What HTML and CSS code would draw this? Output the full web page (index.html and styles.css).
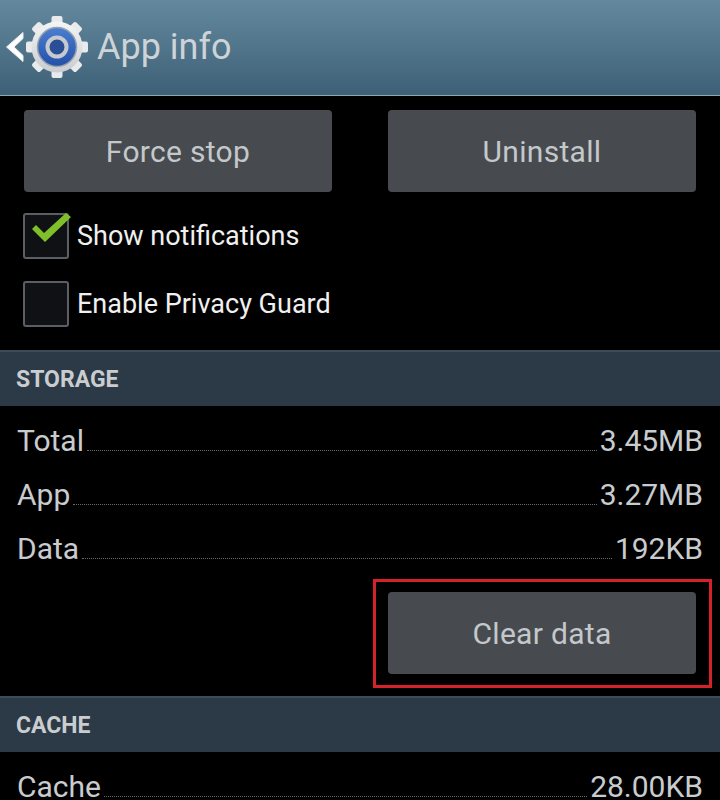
FILE: index.html
```html
<!DOCTYPE html>
<html lang="en">
<head>
<meta charset="utf-8">
<title>App info</title>
<link rel="stylesheet" href="styles.css">
</head>
<body>
<div class="screen">
  <header class="bar">
    <svg class="back" width="24" height="32" viewBox="0 0 24 32"><path d="M20 1.500 L3.500 16 L20 30.500 L20 24.500 L11 16 L20 7.500 Z" fill="#fff" stroke="#e8ecee" stroke-width="1"/></svg>
    <svg class="gear" width="62" height="64" viewBox="-31 -32 62 64">
      <defs>
        <linearGradient id="g1" x1="0" y1="0" x2="0" y2="1"><stop offset="0" stop-color="#f4f5f6"/><stop offset="1" stop-color="#c9ccd0"/></linearGradient>
        <linearGradient id="g2" x1="0" y1="0" x2="0" y2="1"><stop offset="0" stop-color="#4a7fd0"/><stop offset="1" stop-color="#2450a8"/></linearGradient>
      </defs>
      <g fill="#e9eaec">
        <rect x="-5.500" y="-31" width="11" height="62" rx="2"/>
        <rect x="-5.500" y="-31" width="11" height="62" rx="2" transform="rotate(45)"/>
        <rect x="-5.500" y="-31" width="11" height="62" rx="2" transform="rotate(90)"/>
        <rect x="-5.500" y="-31" width="11" height="62" rx="2" transform="rotate(135)"/>
      </g>
      <circle r="25.500" fill="url(#g1)"/>
      <circle r="19.500" fill="url(#g2)" stroke="#9aa3ad" stroke-width="1.500"/>
      <circle r="9.500" fill="#2a4f96" stroke="#c6cacf" stroke-width="4"/>
    </svg>
    <h1 class="title">App info</h1>
  </header>

  <div class="actions">
    <button class="btn">Force stop</button>
    <button class="btn">Uninstall</button>
  </div>

  <div class="checks">
    <div class="check">
      <span class="box">
        <svg class="tick" width="46" height="36" viewBox="0 0 46 36"><path d="M7 16 L11 12 L19 20 L41 0 L46 4 L20 29 Z" fill="#7fbf2a"/></svg>
      </span>
      <span>Show notifications</span>
    </div>
    <div class="check">
      <span class="box"></span>
      <span>Enable Privacy Guard</span>
    </div>
  </div>

  <div class="section">STORAGE</div>
  <div class="rows">
    <div class="row"><span>Total</span><i class="dots"></i><span>3.45MB</span></div>
    <div class="row"><span>App</span><i class="dots"></i><span>3.27MB</span></div>
    <div class="row"><span>Data</span><i class="dots"></i><span>192KB</span></div>
  </div>
  <div class="clear-wrap">
    <button class="btn">Clear data</button>
    <div class="highlight"></div>
  </div>

  <div class="section section-cache">CACHE</div>
  <div class="rows rows-cache">
    <div class="row"><span>Cache</span><i class="dots"></i><span>28.00KB</span></div>
  </div>
</div>
</body>
</html>
```
FILE: styles.css
```css
* { box-sizing: border-box; }
html, body { margin: 0; padding: 0; background: #000; }
.screen {
  width: 720px;
  height: 800px;
  overflow: hidden;
  background: #000;
  font-family: Roboto, "Liberation Sans", sans-serif;
  color: #d4d6d8;
}
.bar {
  height: 96px;
  display: flex;
  align-items: center;
  padding-left: 3px;
  background: linear-gradient(#64899f, #3d6076);
  border-bottom: 1px solid #8fa6b3;
}
.back { flex: none; margin-top: -2px; }
.gear { flex: none; margin-left: -1px; margin-top: -2px; }
.title {
  margin: 0 0 0 9px;
  font-size: 36px;
  font-weight: 400;
  color: #cdd3d7;
  line-height: 1;
  margin-top: -2px;
}
.actions {
  display: flex;
  justify-content: space-between;
  padding: 14px 24px 0;
}
.btn {
  width: 308px;
  height: 82px;
  border: 0;
  border-radius: 4px;
  background: #474b4f;
  color: #c4c8cb;
  font-family: inherit;
  font-size: 30px;
  letter-spacing: 0.3px;
  padding: 0;
}
.checks {
  padding: 21px 0 0 23px;
  display: flex;
  flex-direction: column;
  gap: 22px;
}
.check {
  display: flex;
  align-items: center;
  height: 46px;
  gap: 8px;
  font-size: 27px;
  color: #f0f0f0;
}
.box {
  position: relative;
  width: 46px;
  height: 46px;
  flex: none;
  background: #0f1114;
  border: 2px solid #5b5f63;
  border-radius: 3px;
}
.tick { position: absolute; left: 0; top: -2px; }
.section {
  margin-top: 23px;
  height: 56px;
  padding-left: 16px;
  display: flex;
  align-items: center;
  background: #2b3a46;
  border-top: 2px solid #3c4c59;
  font-size: 23px;
  font-weight: 700;
  color: #c9cdd0;
}
.rows { padding: 13px 17px 0; }
.row {
  display: flex;
  align-items: baseline;
  height: 54px;
  font-size: 30px;
  color: #c9cccf;
  line-height: 44px;
}
.dots {
  flex: 1;
  margin: 0 3px;
  border-bottom: 1px dotted #6a6a6a;
}
.clear-wrap {
  position: relative;
  display: flex;
  justify-content: flex-end;
  padding: 0 24px 0 0;
  margin-top: 11px;
}
.highlight {
  position: absolute;
  left: 373px;
  top: -13px;
  width: 339px;
  height: 109px;
  border: 3px solid #d3222a;
}
.section-cache { margin-top: 22px; }
</style>
```
